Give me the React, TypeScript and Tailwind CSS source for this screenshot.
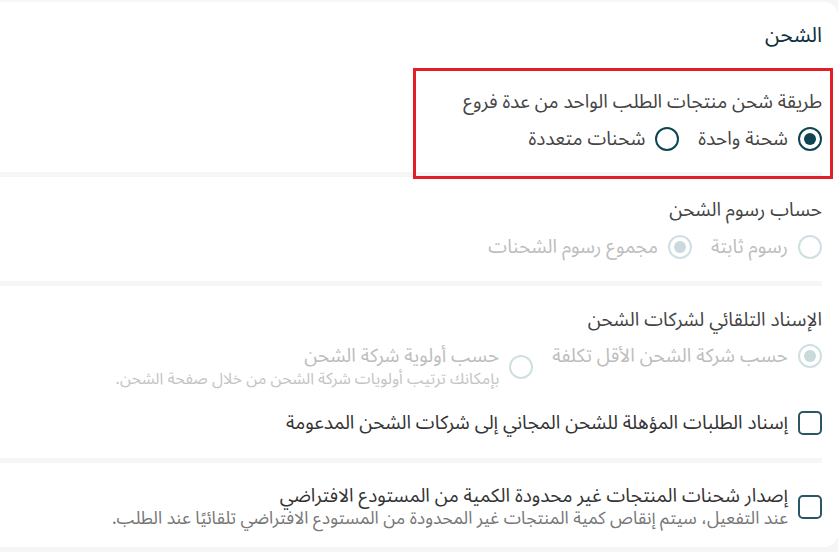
import React, { useState } from 'react';

// إعدادات الشحن — أقسام مفصولة بخطوط رمادية داخل بطاقة بيضاء
const font = { fontFamily: '"Noto Sans Arabic", "Noto Sans", "DejaVu Sans", sans-serif' };

type RadioProps = { checked: boolean; disabled?: boolean; onClick?: () => void };

const Radio: React.FC<RadioProps> = ({ checked, disabled, onClick }) => (
  <span
    onClick={disabled ? undefined : onClick}
    className={`w-6 h-6 rounded-full border-2 flex items-center justify-center shrink-0 ${
      disabled ? 'border-[#cfe0e2]' : 'border-[#0e4553] cursor-pointer'
    }`}
  >
    {checked && <span className={`w-3 h-3 rounded-full ${disabled ? 'bg-[#c9d9dc]' : 'bg-[#0e4553]'}`} />}
  </span>
);

const Checkbox: React.FC<{ checked: boolean; onClick: () => void }> = ({ checked, onClick }) => (
  <span
    onClick={onClick}
    className="w-6 h-6 rounded-[5px] border-2 border-[#2b5663] flex items-center justify-center shrink-0 cursor-pointer"
  >
    {checked && <span className="w-3 h-3 rounded-sm bg-[#0e4553]" />}
  </span>
);

const Divider = () => <div className="h-[5px] bg-[#f6f6f6]" />;

export default function App() {
  const [split, setSplit] = useState<'single' | 'multi'>('single');
  const [freeAssign, setFreeAssign] = useState(false);
  const [unlimited, setUnlimited] = useState(false);

  return (
    <div dir="rtl" style={font} className="w-[838px] h-[552px] bg-[#f6f6f6] pt-[2px] overflow-hidden">
      <div className="bg-white rounded-tr-[14px] rounded-br-[14px] pr-4 pt-[19px] pb-[17px]">
        <h2 className="text-[21px] leading-7 text-[#0c3140]">الشحن</h2>

        {/* طريقة الشحن مع الإطار الأحمر للتمييز */}
        <div className="relative mt-[41px]">
          <div className="absolute -top-[22px] -right-[11px] w-[420px] h-[111px] border-[3px] border-[#e21f26] pointer-events-none" />
          <p className="text-[19px] leading-6 text-[#444]">طريقة شحن منتجات الطلب الواحد من عدة فروع</p>
          <div className="flex items-center gap-2.5 mt-[13px]">
            <div className="flex items-center gap-2.5">
              <Radio checked={split === 'single'} onClick={() => setSplit('single')} />
              <span className="text-[19px] leading-6 text-[#444]">شحنة واحدة</span>
            </div>
            <div className="flex items-center gap-2.5 mr-[9px]">
              <Radio checked={split === 'multi'} onClick={() => setSplit('multi')} />
              <span className="text-[19px] leading-6 text-[#444]">شحنات متعددة</span>
            </div>
          </div>
        </div>
        <div className="mt-[21px]">
          <Divider />
        </div>

        {/* حساب رسوم الشحن (معطّل) */}
        <div className="mt-[21px]">
          <p className="text-[19px] leading-6 text-[#444]">حساب رسوم الشحن</p>
          <div className="flex items-center gap-2.5 mt-[13px]">
            <div className="flex items-center gap-2.5">
              <Radio checked={false} disabled />
              <span className="text-[19px] leading-6 text-[#bdbdbd]">رسوم ثابتة</span>
            </div>
            <div className="flex items-center gap-2.5 mr-[9px]">
              <Radio checked disabled />
              <span className="text-[19px] leading-6 text-[#bdbdbd]">مجموع رسوم الشحنات</span>
            </div>
          </div>
        </div>
        <div className="mt-[22px]">
          <Divider />
        </div>

        {/* الإسناد التلقائي */}
        <div className="mt-[22px]">
          <p className="text-[19px] leading-6 text-[#444]">الإسناد التلقائي لشركات الشحن</p>
          <div className="flex items-start gap-2.5 mt-3">
            <div className="flex items-center gap-2.5">
              <Radio checked disabled />
              <span className="text-[19px] leading-6 text-[#bdbdbd]">حسب شركة الشحن الأقل تكلفة</span>
            </div>
            <div className="flex items-center gap-2.5 mr-[9px]">
              <Radio checked={false} disabled />
              <div>
                <p className="text-[19px] leading-6 text-[#bdbdbd]">حسب أولوية شركة الشحن</p>
                <p className="text-[16px] leading-[22px] text-[#c4c4c4]">بإمكانك ترتيب أولويات شركة الشحن من خلال صفحة الشحن.</p>
              </div>
            </div>
          </div>
          <div className="flex items-center gap-2.5 mt-[21px]">
            <Checkbox checked={freeAssign} onClick={() => setFreeAssign(!freeAssign)} />
            <span className="text-[19px] leading-6 text-[#333]">إسناد الطلبات المؤهلة للشحن المجاني إلى شركات الشحن المدعومة</span>
          </div>
        </div>
        <div className="mt-[23px]">
          <Divider />
        </div>

        {/* المستودع الافتراضي */}
        <div className="flex items-center gap-2.5 mt-[21px]">
          <Checkbox checked={unlimited} onClick={() => setUnlimited(!unlimited)} />
          <div>
            <p className="text-[19px] leading-6 text-[#333]">إصدار شحنات المنتجات غير محدودة الكمية من المستودع الافتراضي</p>
            <p className="text-[17.5px] leading-[22px] text-[#777]">عند التفعيل، سيتم إنقاص كمية المنتجات غير المحدودة من المستودع الافتراضي تلقائيًا عند الطلب.</p>
          </div>
        </div>
      </div>
    </div>
  );
}
